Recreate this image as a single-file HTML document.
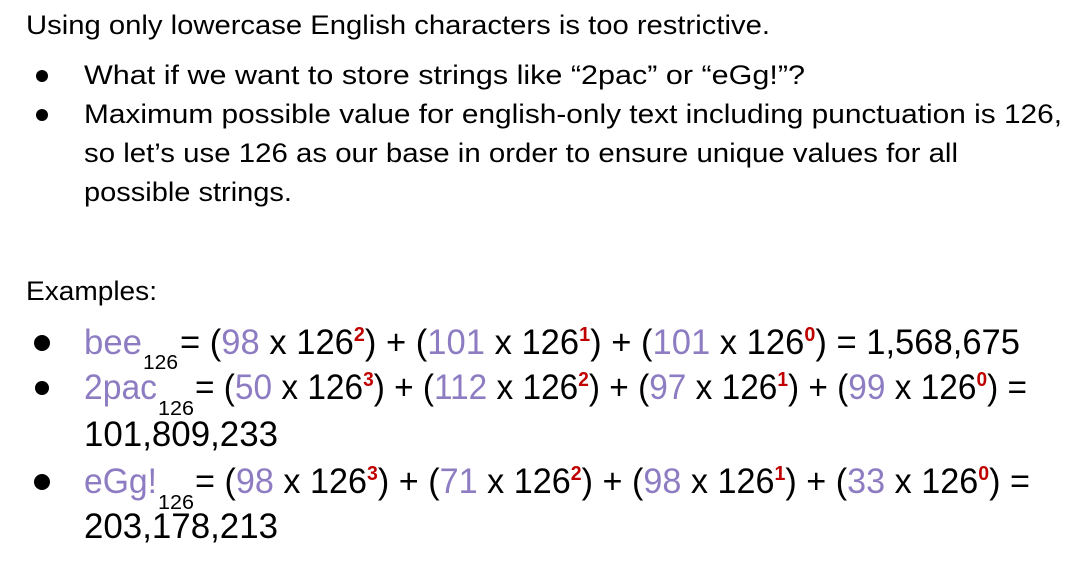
<!DOCTYPE html>
<html><head><style>
html,body{margin:0;padding:0;background:#fff;width:1082px;height:564px;overflow:hidden}
svg{display:block}
text{font-family:"Liberation Sans",sans-serif;fill:#000}
.p{fill:#8e7cc3}
.r{fill:#c00000;font-weight:bold}
</style></head><body>
<svg width="1082" height="564" viewBox="0 0 1082 564">
<g font-size="27">
<text x="26" y="34" textLength="744" lengthAdjust="spacingAndGlyphs">Using only lowercase English characters is too restrictive.</text>
<circle cx="42" cy="76" r="6"/>
<text x="84" y="84" textLength="721" lengthAdjust="spacingAndGlyphs">What if we want to store strings like “2pac”  or “eGg!”?</text>
<circle cx="42" cy="115" r="6"/>
<text x="84" y="123" textLength="978" lengthAdjust="spacingAndGlyphs">Maximum possible value for english-only text including punctuation is 126,</text>
<text x="84" y="162" textLength="874" lengthAdjust="spacingAndGlyphs">so let’s use 126 as our base in order to ensure unique values for all</text>
<text x="84" y="201" textLength="208" lengthAdjust="spacingAndGlyphs">possible strings.</text>
<text x="26" y="300" textLength="131" lengthAdjust="spacingAndGlyphs">Examples:</text>
</g>
<g font-size="35">
<circle cx="42" cy="343" r="8"/>
<text x="84" y="354" class="p" textLength="58" lengthAdjust="spacingAndGlyphs">bee</text>
<text x="143" y="369" font-size="20" textLength="35" lengthAdjust="spacingAndGlyphs">126</text>
<text x="180" y="354" textLength="840" lengthAdjust="spacingAndGlyphs">= (<tspan class="p">98</tspan> x 126<tspan class="r" font-size="20" dy="-13">2</tspan><tspan dy="13">) + (</tspan><tspan class="p">101</tspan> x 126<tspan class="r" font-size="20" dy="-13">1</tspan><tspan dy="13">) + (</tspan><tspan class="p">101</tspan> x 126<tspan class="r" font-size="20" dy="-13">0</tspan><tspan dy="13">) = 1,568,675</tspan></text>

<circle cx="42" cy="388" r="7"/>
<text x="84" y="399" class="p" textLength="73" lengthAdjust="spacingAndGlyphs">2pac</text>
<text x="158" y="415" font-size="20" textLength="36" lengthAdjust="spacingAndGlyphs">126</text>
<text x="195" y="399" textLength="832" lengthAdjust="spacingAndGlyphs">= (<tspan class="p">50</tspan> x 126<tspan class="r" font-size="20" dy="-13">3</tspan><tspan dy="13">) + (</tspan><tspan class="p">112</tspan> x 126<tspan class="r" font-size="20" dy="-13">2</tspan><tspan dy="13">) + (</tspan><tspan class="p">97</tspan> x 126<tspan class="r" font-size="20" dy="-13">1</tspan><tspan dy="13">) + (</tspan><tspan class="p">99</tspan> x 126<tspan class="r" font-size="20" dy="-13">0</tspan><tspan dy="13">) =</tspan></text>
<text x="84" y="446" textLength="194" lengthAdjust="spacingAndGlyphs">101,809,233</text>

<circle cx="42" cy="482" r="8"/>
<text x="84" y="493" class="p" textLength="73" lengthAdjust="spacingAndGlyphs">eGg!</text>
<text x="158" y="509" font-size="20" textLength="36" lengthAdjust="spacingAndGlyphs">126</text>
<text x="195" y="493" textLength="835" lengthAdjust="spacingAndGlyphs">= (<tspan class="p">98</tspan> x 126<tspan class="r" font-size="20" dy="-13">3</tspan><tspan dy="13">) + (</tspan><tspan class="p">71</tspan> x 126<tspan class="r" font-size="20" dy="-13">2</tspan><tspan dy="13">) + (</tspan><tspan class="p">98</tspan> x 126<tspan class="r" font-size="20" dy="-13">1</tspan><tspan dy="13">) + (</tspan><tspan class="p">33</tspan> x 126<tspan class="r" font-size="20" dy="-13">0</tspan><tspan dy="13">) =</tspan></text>
<text x="84" y="538" textLength="194" lengthAdjust="spacingAndGlyphs">203,178,213</text>
</g>
</svg>
</body></html>
